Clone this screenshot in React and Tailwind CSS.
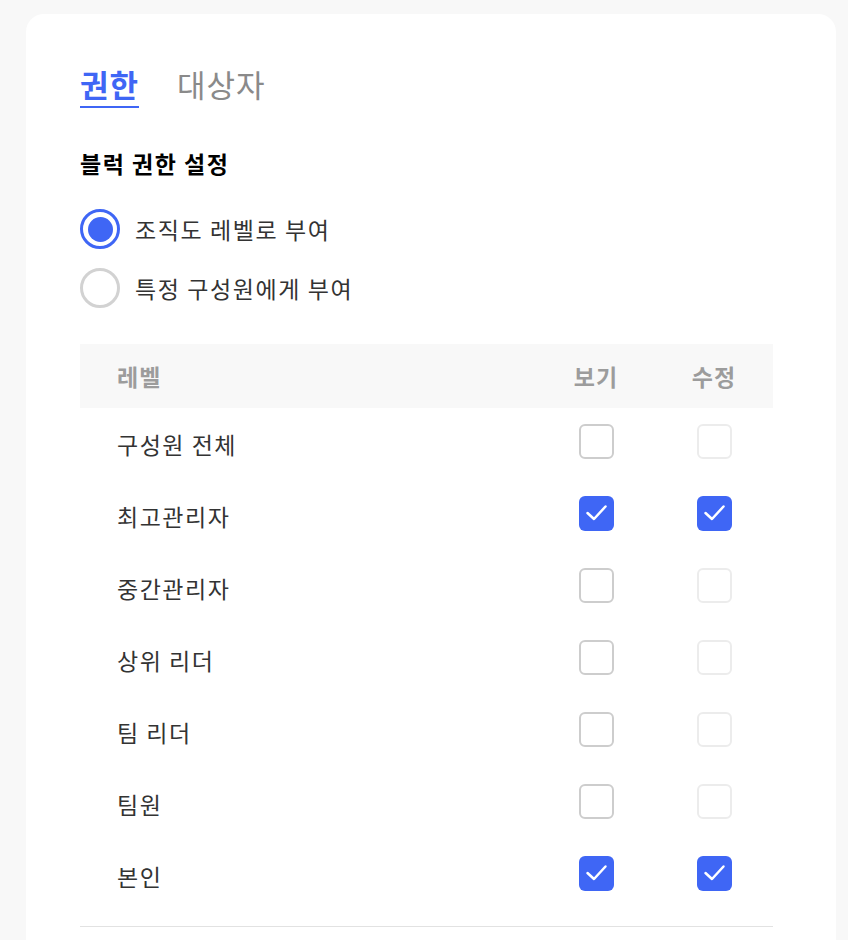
import React from 'react';

const rows = [
    { name: "구성원 전체", view: false, edit: false },
    { name: "최고관리자", view: true, edit: true },
    { name: "중간관리자", view: false, edit: false },
    { name: "상위 리더", view: false, edit: false },
    { name: "팀 리더", view: false, edit: false },
    { name: "팀원", view: false, edit: false },
    { name: "본인", view: true, edit: true },
];

const CheckBox = ({ checked, muted }) => {
    if (checked) {
        return (
            <div className="w-[35px] h-[35px] rounded-[6px] bg-[#3f66f5] mb-[6px]">
                <svg width="35" height="35" viewBox="0 0 35 35" fill="none">
                    <path d="M8.5 17 L15 23 L26.5 10.5" stroke="white" strokeWidth="2.5" strokeLinecap="round" strokeLinejoin="round" />
                </svg>
            </div>
        );
    }
    return (
        <div
            className={
                muted
                    ? "w-[35px] h-[35px] rounded-[6px] border-2 border-[#ececec] bg-white mb-[6px]"
                    : "w-[35px] h-[35px] rounded-[6px] border-2 border-[#cdcdcd] bg-white mb-[6px]"
            }
        />
    );
};

const Radio = ({ selected, label }) => (
    <div className="flex items-center h-[40px]">
        {selected ? (
            <div className="w-[40px] h-[40px] rounded-full border-[3px] border-[#3f66f5] flex items-center justify-center">
                <div className="w-[25px] h-[25px] rounded-full bg-[#3f66f5]" />
            </div>
        ) : (
            <div className="w-[40px] h-[40px] rounded-full border-[3px] border-[#d2d2d2]" />
        )}
        <span className="ml-[15px] text-[23px] tracking-[1.6px] leading-[30px] text-[#333]">{label}</span>
    </div>
);

export default function App() {
    return (
        <div className="min-h-screen bg-[#f8f8f8] pt-[14px] pl-[26px] font-['Noto_Sans_CJK_KR','Noto_Sans',sans-serif]">
            <div className="w-[810px] min-h-[926px] bg-white rounded-t-[18px] pt-[50px] pl-[54px]">
                {/* tabs */}
                <div className="flex items-start gap-[38px]">
                    <div className="flex flex-col">
                        <span className="text-[31px] tracking-[1px] leading-[40px] font-bold text-[#3f66f5]">권한</span>
                        <div className="mt-[2px] h-[2px] bg-[#3f66f5]" />
                    </div>
                    <span className="text-[31px] tracking-[1px] leading-[40px] text-[#8a8a8a]">대상자</span>
                </div>

                <h3 className="mt-[40px] text-[23px] tracking-[1.5px] leading-[30px] font-bold text-black">블럭 권한 설정</h3>

                <div className="mt-[31px] flex flex-col gap-[19px]">
                    <Radio selected label="조직도 레벨로 부여" />
                    <Radio label="특정 구성원에게 부여" />
                </div>

                {/* table */}
                <div className="mt-[36px] w-[693px]">
                    <div className="h-[64px] bg-[#f8f8f8] flex items-center text-[23px] tracking-[1px] font-bold text-[#9c9c9c]">
                        <span className="pl-[37px] flex-1">레벨</span>
                        <span className="w-[118px] text-center">보기</span>
                        <span className="w-[118px] text-center">수정</span>
                    </div>
                    {rows.map((row) => (
                        <div key={row.name} className="h-[72px] flex items-center">
                            <span className="pl-[37px] flex-1 text-[23px] tracking-[1.5px] text-[#333]">{row.name}</span>
                            <div className="w-[118px] flex justify-center">
                                <CheckBox checked={row.view} />
                            </div>
                            <div className="w-[118px] flex justify-center">
                                <CheckBox checked={row.edit} muted />
                            </div>
                        </div>
                    ))}
                    <div className="mt-[14px] h-px bg-[#e2e2e2]" />
                </div>
            </div>
        </div>
    );
}
